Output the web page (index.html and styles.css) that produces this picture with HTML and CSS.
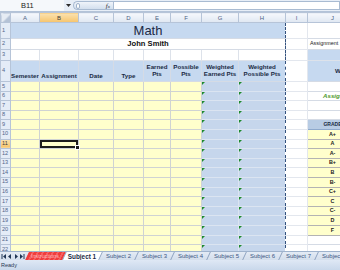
FILE: index.html
```html
<!DOCTYPE html>
<html>
<head>
<meta charset="utf-8">
<title>Grades</title>
<link rel="stylesheet" href="styles.css">
</head>
<body>
<div class="app">
  <div class="fbar">
    <div class="namebox">B11</div>
    <div class="nb-arrow"><svg width="5" height="3" viewBox="0 0 5 3"><path d="M0 0H5L2.5 3Z" fill="#2b2b2b"/></svg></div>
    <div class="fx-group"><span class="knob"></span><span class="fx">f<span class="sub">x</span></span></div>
    <div class="finput"></div>
  </div>

  <div class="sheet">
    <table class="grid">
      <colgroup>
        <col class="c-rh"><col class="c-a"><col class="c-b"><col class="c-c"><col class="c-d"><col class="c-e"><col class="c-f"><col class="c-g"><col class="c-h"><col class="c-i"><col class="c-j">
      </colgroup>
      <tr class="ch"><th class="corner"></th><th>A</th><th class="on">B</th><th>C</th><th>D</th><th>E</th><th>F</th><th>G</th><th>H</th><th>I</th><th>J</th></tr>
      <tr class="r1"><th class="rn">1</th><td colspan="8" class="title">Math</td><td class="i"></td><td class="w"></td></tr>
      <tr class="r2"><th class="rn">2</th><td colspan="8" class="name">John Smith</td><td class="i"></td><td class="box">Assignment</td></tr>
      <tr class="r3"><th class="rn">3</th><td></td><td></td><td></td><td></td><td></td><td></td><td></td><td></td><td class="i"></td><td class="jb"></td></tr>
      <tr class="r4"><th class="rn">4</th><td class="hd">Semester</td><td class="hd">Assignment</td><td class="hd">Date</td><td class="hd">Type</td><td class="hd two">Earned<br>Pts</td><td class="hd two">Possible<br>Pts</td><td class="hd two">Weighted<br>Earned Pts</td><td class="hd two">Weighted<br>Possible Pts</td><td class="i"></td><td class="jb wt">Weighted</td></tr>
      <tr class="d"><th class="rn">5</th><td></td><td></td><td></td><td></td><td></td><td></td><td></td><td></td><td class="i"></td><td class="w"></td></tr>
      <tr class="d"><th class="rn">6</th><td></td><td></td><td></td><td></td><td></td><td></td><td></td><td></td><td class="i"></td><td class="w note">Assignment Weights</td></tr>
      <tr class="d"><th class="rn">7</th><td></td><td></td><td></td><td></td><td></td><td></td><td></td><td></td><td class="i"></td><td class="w"></td></tr>
      <tr class="d"><th class="rn">8</th><td></td><td></td><td></td><td></td><td></td><td></td><td></td><td></td><td class="i"></td><td class="w"></td></tr>
      <tr class="d"><th class="rn">9</th><td></td><td></td><td></td><td></td><td></td><td></td><td></td><td></td><td class="i"></td><td class="gh">GRADE</td></tr>
      <tr class="d"><th class="rn">10</th><td></td><td></td><td></td><td></td><td></td><td></td><td></td><td></td><td class="i"></td><td class="g">A+</td></tr>
      <tr class="d"><th class="rn on">11</th><td></td><td class="cur"></td><td></td><td></td><td></td><td></td><td></td><td></td><td class="i"></td><td class="g">A</td></tr>
      <tr class="d"><th class="rn">12</th><td></td><td></td><td></td><td></td><td></td><td></td><td></td><td></td><td class="i"></td><td class="g">A-</td></tr>
      <tr class="d"><th class="rn">13</th><td></td><td></td><td></td><td></td><td></td><td></td><td></td><td></td><td class="i"></td><td class="g">B+</td></tr>
      <tr class="d"><th class="rn">14</th><td></td><td></td><td></td><td></td><td></td><td></td><td></td><td></td><td class="i"></td><td class="g">B</td></tr>
      <tr class="d"><th class="rn">15</th><td></td><td></td><td></td><td></td><td></td><td></td><td></td><td></td><td class="i"></td><td class="g">B-</td></tr>
      <tr class="d"><th class="rn">16</th><td></td><td></td><td></td><td></td><td></td><td></td><td></td><td></td><td class="i"></td><td class="g">C+</td></tr>
      <tr class="d"><th class="rn">17</th><td></td><td></td><td></td><td></td><td></td><td></td><td></td><td></td><td class="i"></td><td class="g">C</td></tr>
      <tr class="d"><th class="rn">18</th><td></td><td></td><td></td><td></td><td></td><td></td><td></td><td></td><td class="i"></td><td class="g">C-</td></tr>
      <tr class="d"><th class="rn">19</th><td></td><td></td><td></td><td></td><td></td><td></td><td></td><td></td><td class="i"></td><td class="g">D</td></tr>
      <tr class="d"><th class="rn">20</th><td></td><td></td><td></td><td></td><td></td><td></td><td></td><td></td><td class="i"></td><td class="g">F</td></tr>
      <tr class="d"><th class="rn">21</th><td></td><td></td><td></td><td></td><td></td><td></td><td></td><td></td><td class="i"></td><td class="w"></td></tr>
      <tr class="d"><th class="rn">22</th><td></td><td></td><td></td><td></td><td></td><td></td><td></td><td></td><td class="i"></td><td class="w"></td></tr>
    </table>
  </div>

  <div class="tabs">
    <div class="nav">
      <svg width="24" height="5" viewBox="0 0 24 5">
        <path d="M1 0V5" stroke="#1f3553" stroke-width="1"/>
        <path d="M5 0V5L2 2.5Z" fill="#1f3553"/>
        <path d="M10 0V5L7 2.5Z" fill="#1f3553"/>
        <path d="M14 0V5L17 2.5Z" fill="#1f3553"/>
        <path d="M19 0V5L22 2.5Z" fill="#1f3553"/>
        <path d="M23 0V5" stroke="#1f3553" stroke-width="1"/>
      </svg>
    </div>
    <div class="tab red"><span>Instructions</span></div>
    <div class="tab active"><span>Subject 1</span></div>
    <div class="tab"><span>Subject 2</span></div>
    <div class="tab"><span>Subject 3</span></div>
    <div class="tab"><span>Subject 4</span></div>
    <div class="tab"><span>Subject 5</span></div>
    <div class="tab"><span>Subject 6</span></div>
    <div class="tab"><span>Subject 7</span></div>
    <div class="tab"><span>Subject 8</span></div>
  </div>

  <div class="status">Ready</div>
</div>
</body>
</html>
```

FILE: styles.css
```css
* { box-sizing: border-box; }
html, body { margin: 0; padding: 0; }
body {
  width: 340px;
  height: 270px;
  overflow: hidden;
  background: #fff;
  font-family: "Liberation Sans", Arial, sans-serif;
}
.app { display: flex; flex-direction: column; height: 270px; }

/* formula bar */
.fbar {
  flex: none;
  height: 12px;
  display: flex;
  background: #e7eef7;
  border-bottom: 1px solid #b3c3d8;
}
.namebox {
  width: 64px;
  padding-left: 21px;
  display: flex;
  align-items: center;
  font-size: 7.5px;
  color: #222;
  background: #f5f8fb;
}
.nb-arrow { width: 9px; display: flex; align-items: center; justify-content: center; }
.fx-group {
  width: 40px;
  margin: 1px 0;
  padding: 0 3px 0 2px;
  display: flex;
  align-items: center;
  justify-content: space-between;
  border: 1px solid #a9bbd2;
  border-right: none;
  border-radius: 5px 0 0 5px;
  background: linear-gradient(#f0f4fa, #d3dfee);
}
.knob { width: 4px; height: 6px; border-radius: 2px; border: 1px solid #9fb2ca; background: #fff; }
.fx { font-family: "Liberation Serif", serif; font-style: italic; font-size: 7px; color: #333; }
.fx .sub { font-size: 5px; }
.finput { flex: 1; margin: 1px 0; background: #fff; border: 1px solid #a9bbd2; }

/* sheet grid */
.sheet { flex: 1; overflow: hidden; }
.grid { border-collapse: collapse; table-layout: fixed; width: 357px; }
.c-rh { width: 10px; }
.c-a { width: 29px; }
.c-b { width: 39px; }
.c-c { width: 35px; }
.c-d { width: 30px; }
.c-e { width: 27px; }
.c-f { width: 31px; }
.c-g { width: 37px; }
.c-h { width: 47px; }
.c-i { width: 22px; }
.c-j { width: 50px; }

.grid th, .grid td {
  padding: 0;
  line-height: 1;
  white-space: nowrap;
  overflow: hidden;
}
.grid td { border: 1px solid #d5dbe5; }

.ch { height: 10px; }
.ch th {
  font-size: 6px;
  font-weight: normal;
  color: #4f6284;
  text-align: center;
  background: linear-gradient(#f6f8fc, #dfe7f2);
  border: 1px solid #b6c4d8;
}
.ch th.on { background: linear-gradient(#fbe2b0, #f6c46c); color: #3d3d3d; }
.ch th.corner { background: linear-gradient(135deg, #e6ecf4 55%, #b4c2d6 56%); }

.rn {
  font-size: 5.6px;
  font-weight: normal;
  color: #51658a;
  text-align: left;
  padding-left: 1px !important;
  background: #e4ecf7;
  border: 1px solid #b6c4d8;
}
.rn.on { background: linear-gradient(#fbe2b0, #f6c46c); color: #3d3d3d; }

.r1 { height: 16px; }
.r2 { height: 11px; }
.r3 { height: 11px; }
.r4 { height: 21px; }
.d { height: 9.6px; }

.title {
  background: #c6d9f0;
  border-color: #a9bedb;
  font-size: 13px;
  color: #1b2945;
  text-align: center;
}
.name {
  font-size: 7.6px;
  font-weight: bold;
  color: #111;
  text-align: center;
}
.r3 td { border-color: #dde2ea; }

.hd {
  background: #c6d9f0;
  border-color: #a8bddb;
  font-size: 6.2px;
  font-weight: bold;
  color: #1a2b45;
  text-align: center;
  vertical-align: bottom;
  padding-bottom: 2px !important;
}
.hd.two {
  vertical-align: top;
  line-height: 7px;
  padding: 2px 0 0 !important;
}

/* data columns */
.d td:nth-child(-n+7) { background: #ffffcc; border-color: #cfd3d3; }
.d td:nth-child(8), .d td:nth-child(9) {
  position: relative;
  background: #c6d6ec;
  border-color: #dbe4f1;
}
.d td:nth-child(8)::before, .d td:nth-child(9)::before {
  content: "";
  position: absolute;
  left: 0;
  top: 0;
  border-top: 3px solid #1d8a2c;
  border-right: 3px solid transparent;
}
.cur { box-shadow: inset 0 0 0 2px #1c1c1c; position: relative; overflow: visible !important; }
.cur::after {
  content: "";
  position: absolute;
  right: -2px;
  bottom: -2px;
  width: 3px;
  height: 3px;
  background: #1c1c1c;
  border: 1px solid #fff;
}

/* page break between H and I */
.grid tr > td:nth-last-child(3) { border-right: none; }
.grid td.i { border-left: 1px dashed #34527e; border-top-color: #e3e7ee; border-bottom-color: #e3e7ee; border-right-color: #e3e7ee; }

/* J column */
.w { border-color: #eceff3; }
.box {
  border: 1px solid #7f8a99;
  background: #fff;
  font-size: 5.4px;
  color: #222;
  padding-left: 2px !important;
}
.jb { background: #c6d9f0; border-color: #a8bddb; }
.wt {
  padding-left: 27px !important;
  font-size: 6.2px;
  font-weight: bold;
  color: #1a2b45;
}
.note {
  padding-left: 15px !important;
  font-size: 6.2px;
  font-weight: bold;
  font-style: italic;
  color: #4f9b2f;
}
.d td.gh {
  background: #b8cce4;
  border-color: #8ea9cc;
  font-size: 5px;
  font-weight: bold;
  color: #1a2b45;
  text-align: center;
}
.d td.g {
  background: #ffffcc;
  border-color: #b3b3b3;
  font-size: 5.4px;
  font-weight: bold;
  color: #222;
  text-align: center;
}

/* sheet tabs */
.tabs {
  flex: none;
  height: 9px;
  display: flex;
  background: linear-gradient(#e4ebf5, #d3deec);
  border-top: 1px solid #9fb3cd;
  font-size: 6px;
  overflow: hidden;
}
.nav { width: 27px; flex: none; display: flex; align-items: center; padding-left: 1px; }
.tab {
  flex: none;
  width: 36px;
  display: flex;
  align-items: center;
  justify-content: center;
  transform: skewX(-25deg);
  border-right: 1px solid #8ea3c1;
  color: #3a5683;
}
.tab span { transform: skewX(25deg); white-space: nowrap; }
.tab.red {
  width: 38px;
  background: repeating-linear-gradient(90deg, #f03c3c 0 3px, #f56060 3px 5px);
  color: #ffb8b8;
  font-size: 5.5px;
}
.tab.active { background: #fff; color: #1c2c44; font-weight: bold; font-size: 6.4px; }

/* status bar */
.status {
  flex: none;
  height: 10px;
  display: flex;
  align-items: center;
  padding-left: 1px;
  background: linear-gradient(#dfe8f5, #c9d8eb);
  font-size: 5.5px;
  color: #2a3b55;
}
```
